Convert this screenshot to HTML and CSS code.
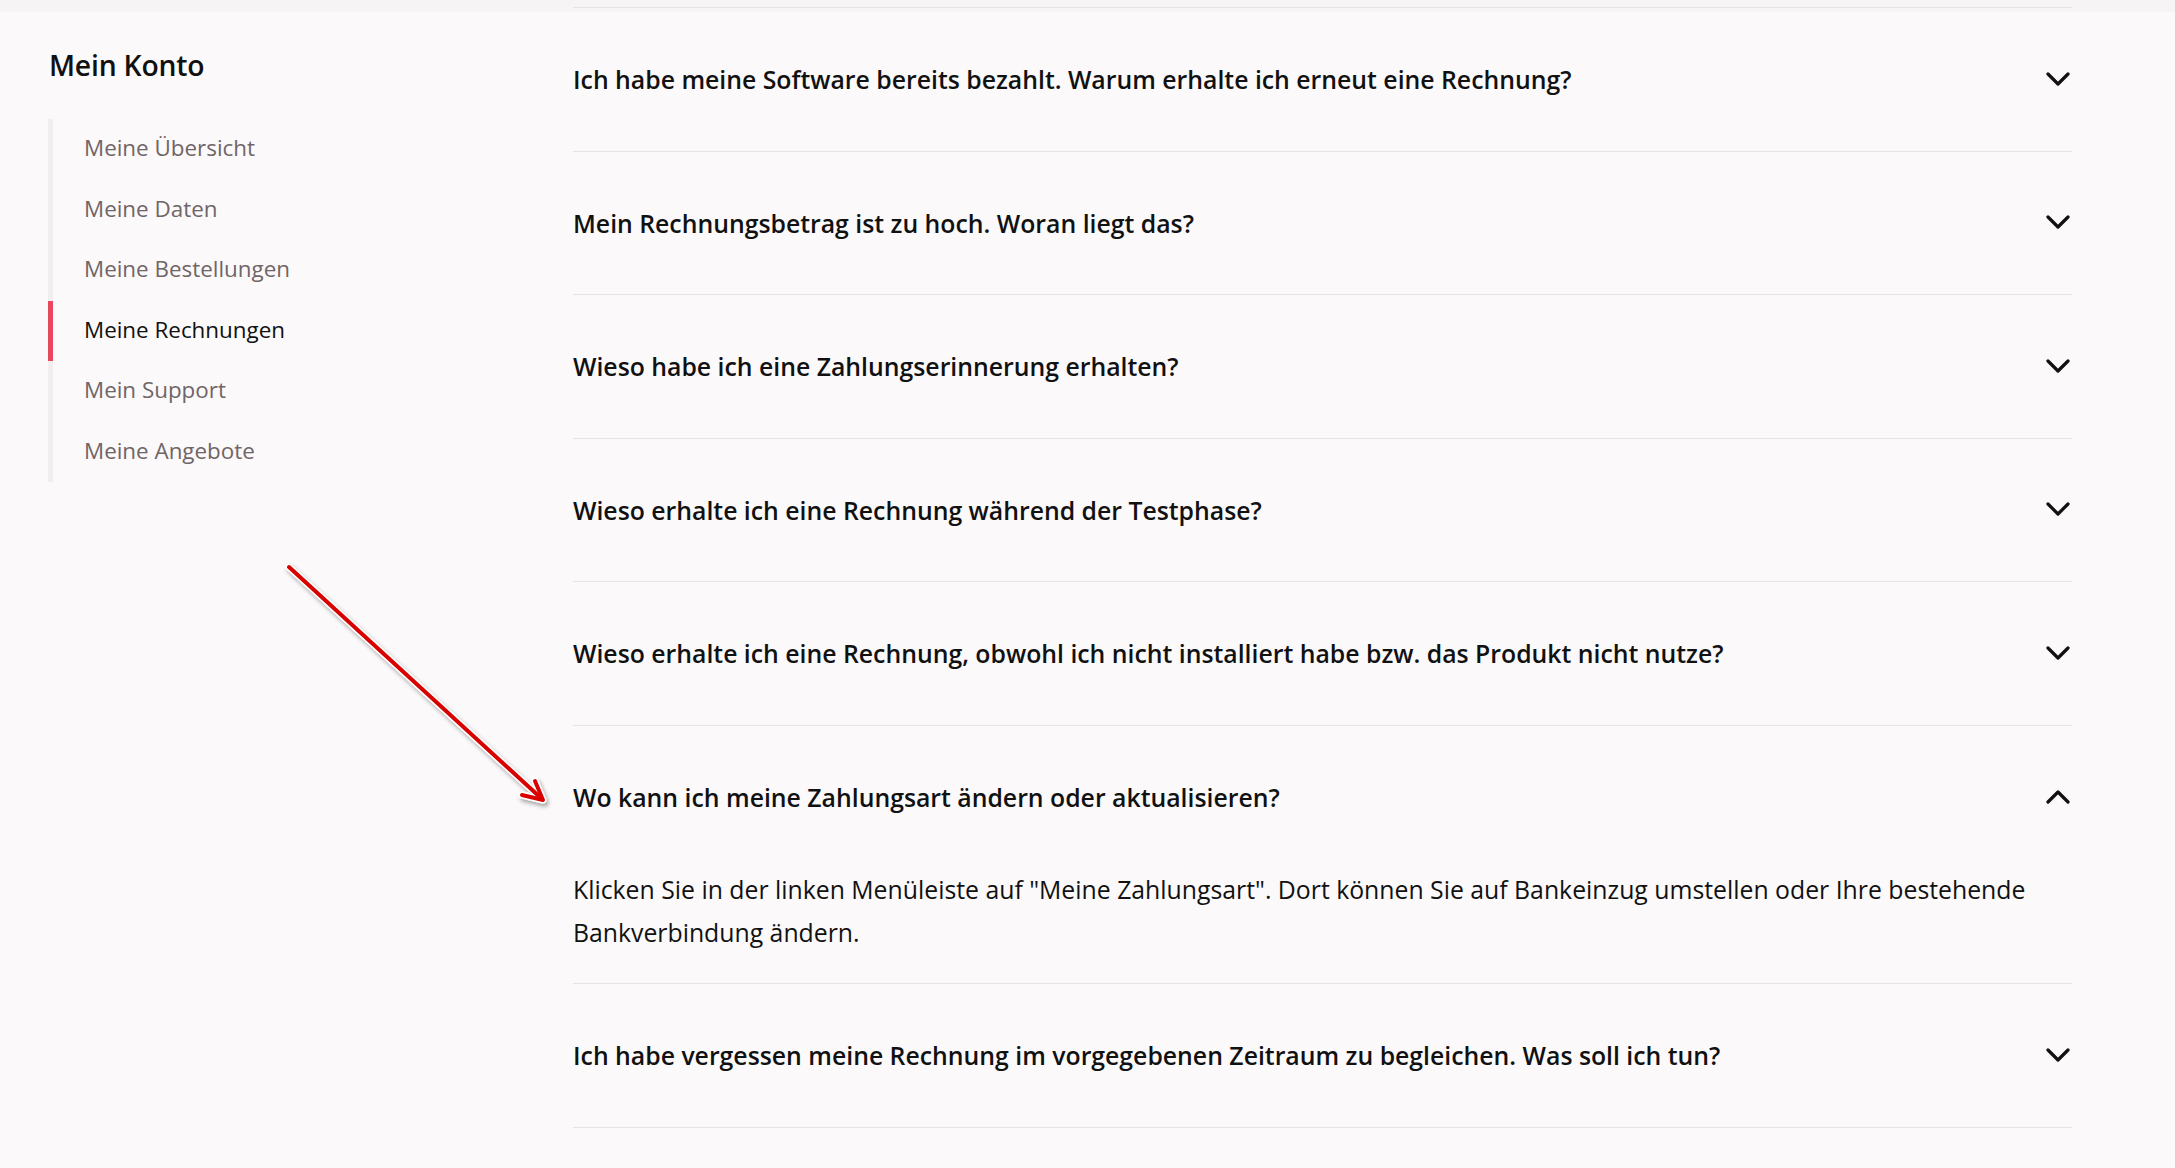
FILE: index.html
```html
<!DOCTYPE html>
<html lang="de">
<head>
    <meta charset="UTF-8">
    <meta name="viewport" content="width=device-width, initial-scale=1.0">
    <title>Meine Rechnungen</title>
    <link rel="stylesheet" href="styles.css">
</head>
<body>
    <div class="page">
        <aside class="sidebar">
            <h2>Mein Konto</h2>
            <nav class="account-nav">
                <a href="#">Meine Übersicht</a>
                <a href="#">Meine Daten</a>
                <a href="#">Meine Bestellungen</a>
                <a href="#" class="active">Meine Rechnungen</a>
                <a href="#">Mein Support</a>
                <a href="#">Meine Angebote</a>
            </nav>
        </aside>

        <main class="faq">
            <div class="faq-item">
                <button class="faq-question">Ich habe meine Software bereits bezahlt. Warum erhalte ich erneut eine Rechnung?<svg class="chevron" viewBox="0 0 24 15"><polyline points="2,2 12,12 22,2"/></svg></button>
            </div>
            <div class="faq-item">
                <button class="faq-question">Mein Rechnungsbetrag ist zu hoch. Woran liegt das?<svg class="chevron" viewBox="0 0 24 15"><polyline points="2,2 12,12 22,2"/></svg></button>
            </div>
            <div class="faq-item">
                <button class="faq-question">Wieso habe ich eine Zahlungserinnerung erhalten?<svg class="chevron" viewBox="0 0 24 15"><polyline points="2,2 12,12 22,2"/></svg></button>
            </div>
            <div class="faq-item">
                <button class="faq-question">Wieso erhalte ich eine Rechnung während der Testphase?<svg class="chevron" viewBox="0 0 24 15"><polyline points="2,2 12,12 22,2"/></svg></button>
            </div>
            <div class="faq-item">
                <button class="faq-question">Wieso erhalte ich eine Rechnung, obwohl ich nicht installiert habe bzw. das Produkt nicht nutze?<svg class="chevron" viewBox="0 0 24 15"><polyline points="2,2 12,12 22,2"/></svg></button>
            </div>
            <div class="faq-item open">
                <button class="faq-question">Wo kann ich meine Zahlungsart ändern oder aktualisieren?<svg class="chevron" viewBox="0 0 24 15"><polyline points="2,2 12,12 22,2"/></svg></button>
                <p class="faq-answer">Klicken Sie in der linken Menüleiste auf "Meine Zahlungsart". Dort können Sie auf Bankeinzug umstellen oder Ihre bestehende Bankverbindung ändern.</p>
            </div>
            <div class="faq-item">
                <button class="faq-question">Ich habe vergessen meine Rechnung im vorgegebenen Zeitraum zu begleichen. Was soll ich tun?<svg class="chevron" viewBox="0 0 24 15"><polyline points="2,2 12,12 22,2"/></svg></button>
            </div>
        </main>
    </div>

    <!-- annotation arrow -->
    <svg class="pointer-arrow" width="280" height="260" viewBox="0 0 280 260">
        <defs>
            <filter id="arrowShadow" x="-10%" y="-10%" width="130%" height="130%">
                <feDropShadow dx="2" dy="3" stdDeviation="2" flood-color="#000" flood-opacity="0.35"/>
            </filter>
        </defs>
        <g filter="url(#arrowShadow)" fill="none" stroke-linecap="round" stroke-linejoin="round">
            <g stroke="#fff" stroke-width="7">
                <line x1="9" y1="12" x2="262" y2="244"/>
                <polyline points="255,226 263,245 242,240"/>
            </g>
            <g stroke="#d90000" stroke-width="4">
                <line x1="9" y1="12" x2="262" y2="244"/>
                <polyline points="255,226 263,245 242,240"/>
            </g>
        </g>
    </svg>
</body>
</html>
```

FILE: styles.css
```css
:root {
    --bg: #fbf9fa;
    --bg-top: #f6f4f5;
    --text: #111;
    --text-muted: #706567;
    --line: #e6e3e4;
    --rail: #f0eeef;
    --accent: #e8485e;
}

* {
    margin: 0;
    padding: 0;
    box-sizing: border-box;
}

body {
    font-family: "Open Sans", "Noto Sans", sans-serif;
    color: var(--text);
    background: linear-gradient(var(--bg-top) 12px, var(--bg) 12px);
    min-height: 100vh;
    overflow: hidden;
}

.page {
    display: flex;
    align-items: flex-start;
}

/* sidebar */

.sidebar {
    width: 573px;
    flex-shrink: 0;
    padding: 47px 0 0 48px;
}

.sidebar h2 {
    font-size: 28.3px;
    font-weight: 600;
    line-height: 36px;
    padding-left: 1px;
    letter-spacing: -0.2px;
}

.account-nav {
    display: flex;
    flex-direction: column;
    margin-top: 36px;
    border-left: 5px solid var(--rail);
    width: 300px;
}

.account-nav a {
    display: flex;
    align-items: center;
    height: 60.5px;
    padding-left: 31px;
    padding-bottom: 3px;
    margin-left: -5px;
    border-left: 5px solid transparent;
    color: var(--text-muted);
    text-decoration: none;
    font-size: 22.4px;
}

.account-nav a.active {
    color: var(--text);
    border-left-color: var(--accent);
}

/* faq list */

.faq {
    width: 1499px;
    margin-top: 7px;
    border-top: 1px solid var(--line);
}

.faq-item {
    border-bottom: 1px solid var(--line);
}

.faq-question {
    width: 100%;
    height: 142.5px;
    display: flex;
    align-items: center;
    justify-content: space-between;
    background: none;
    border: none;
    font-family: inherit;
    font-size: 24.8px;
    font-weight: 600;
    color: var(--text);
    text-align: left;
    cursor: pointer;
    padding-right: 2px;
}

.chevron {
    width: 24px;
    height: 15px;
    flex-shrink: 0;
    fill: none;
    stroke: var(--text);
    stroke-width: 3.2;
    stroke-linecap: round;
    stroke-linejoin: round;
}

.faq-item.open .chevron {
    transform: rotate(180deg);
}

.faq-answer {
    font-size: 24.8px;
    line-height: 43px;
    padding-bottom: 29px;
    padding-right: 30px;
}

.pointer-arrow {
    position: absolute;
    left: 280px;
    top: 555px;
}
```
